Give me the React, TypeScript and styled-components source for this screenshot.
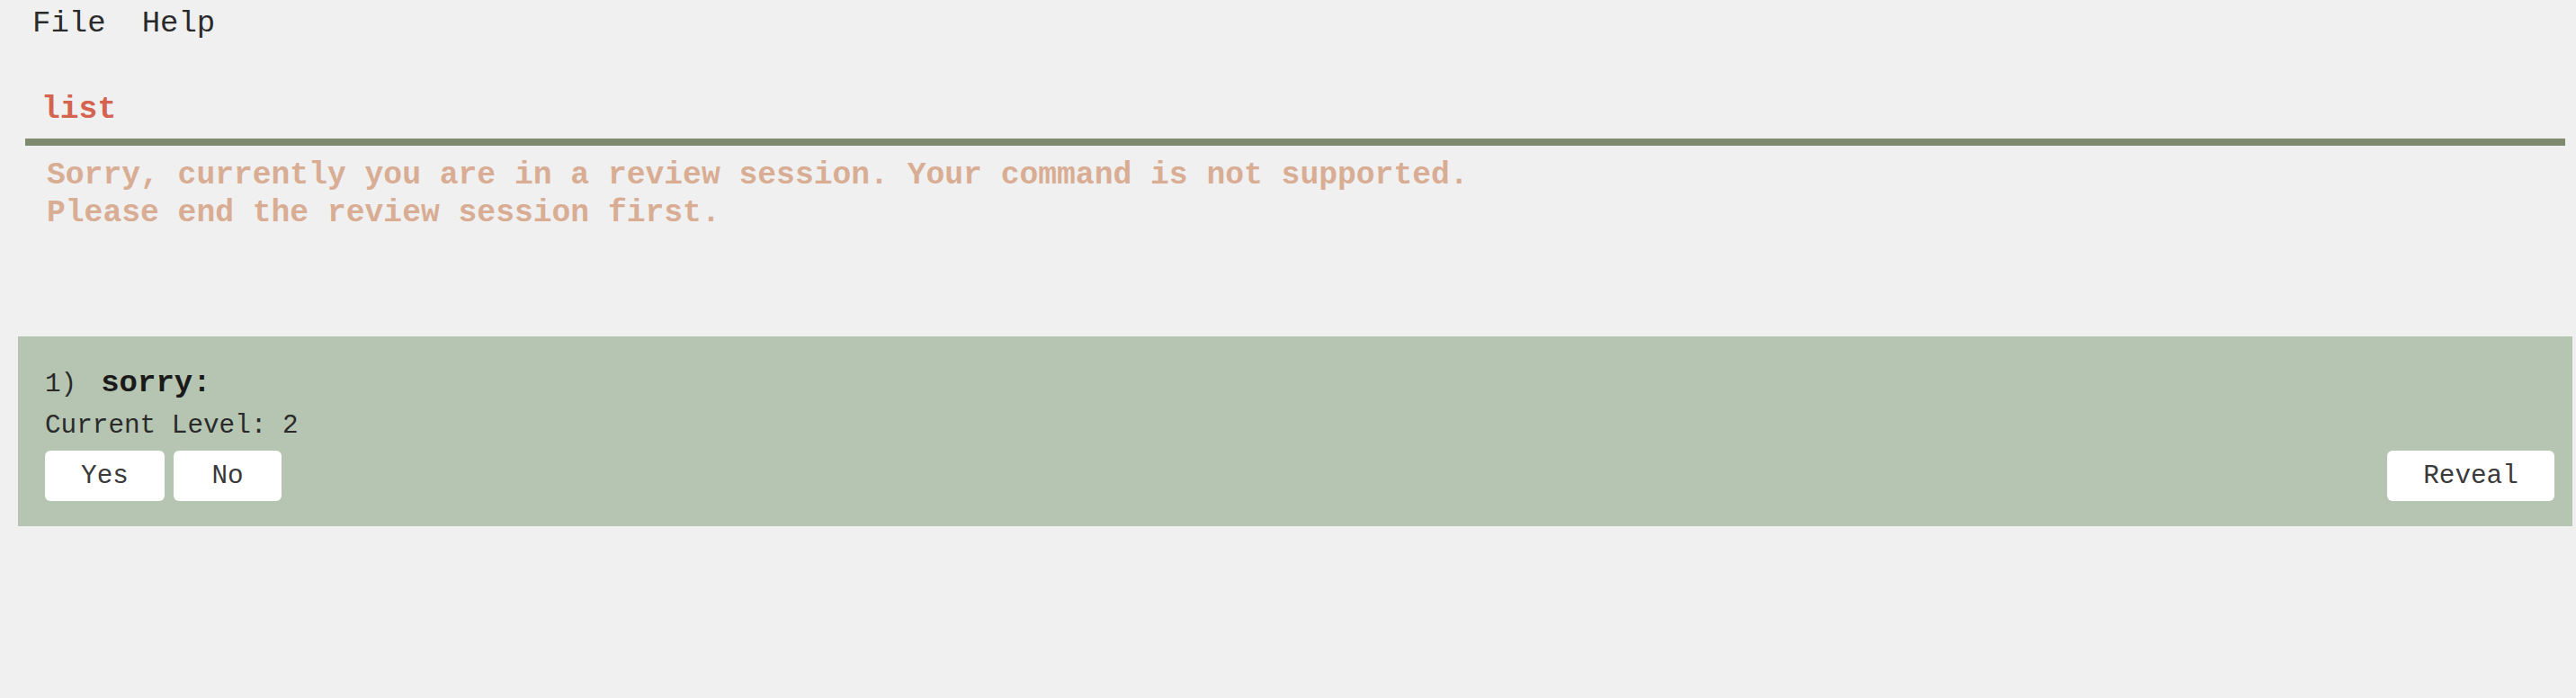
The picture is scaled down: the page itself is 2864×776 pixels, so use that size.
import styled, { createGlobalStyle } from "styled-components";

const GlobalStyle = createGlobalStyle`
  body {
    margin: 0;
    background: #f0f0f0;
    font-family: "Liberation Mono", "Courier New", monospace;
  }
`;

const Page = styled.div`
  display: flex;
  flex-direction: column;
  width: 2864px;
  height: 776px;
  background: #f0f0f0;
`;

const MenuBar = styled.div`
  display: flex;
  height: 50px;
  padding: 6px 0 0 16px;
  box-sizing: border-box;
`;

const MenuItem = styled.div`
  padding: 0 20px;
  font-size: 34px;
  line-height: 40px;
  color: #2a2a2a;
`;

const CommandBox = styled.div`
  padding: 52px 0 0 46px;
  height: 40px;
  font-size: 34.67px;
  line-height: 40px;
  font-weight: bold;
  color: #d4634f;
`;

const Divider = styled.div`
  height: 8px;
  margin: 12px 12px 0 28px;
  background: #7e8b6e;
`;

const ResultBox = styled.div`
  height: 212px;
  box-sizing: border-box;
  padding: 12px 0 0 52px;
  font-size: 34.67px;
  line-height: 42px;
  font-weight: bold;
  color: #d8ad94;
  white-space: pre;
`;

const Card = styled.div`
  display: flex;
  flex-direction: column;
  margin: 0 4px 0 20px;
  padding: 32px 20px 28px 30px;
  background: #b5c5b1;
  color: #2a2a2a;
`;

const TitleRow = styled.div`
  display: flex;
  align-items: baseline;
  gap: 27px;
  line-height: 40px;
`;

const Index = styled.span`
  font-size: 29.33px;
`;

const Word = styled.span`
  font-size: 34px;
  font-weight: bold;
  color: #1a1a1a;
`;

const Level = styled.div`
  margin-top: 8px;
  font-size: 29.33px;
  line-height: 36px;
`;

const ButtonRow = styled.div`
  display: flex;
  gap: 10px;
  margin-top: 9px;
`;

const Button = styled.button<{ $w: number }>`
  width: ${(p) => p.$w}px;
  height: 56px;
  border: none;
  border-radius: 6px;
  background: #fff;
  font-family: "Liberation Mono", "Courier New", monospace;
  font-size: 29.33px;
  color: #3a3a3a;
  padding: 0;
`;

const Spacer = styled.div`
  flex: 1;
`;

export default function App() {
  return (
    <Page>
      <GlobalStyle />
      <MenuBar>
        <MenuItem>File</MenuItem>
        <MenuItem>Help</MenuItem>
      </MenuBar>
      <CommandBox>list</CommandBox>
      <Divider />
      <ResultBox>
        {"Sorry, currently you are in a review session. Your command is not supported.\nPlease end the review session first."}
      </ResultBox>
      <Card>
        <TitleRow>
          <Index>1)</Index>
          <Word>sorry:</Word>
        </TitleRow>
        <Level>Current Level: 2</Level>
        <ButtonRow>
          <Button $w={133}>Yes</Button>
          <Button $w={120}>No</Button>
          <Spacer />
          <Button $w={186}>Reveal</Button>
        </ButtonRow>
      </Card>
    </Page>
  );
}
